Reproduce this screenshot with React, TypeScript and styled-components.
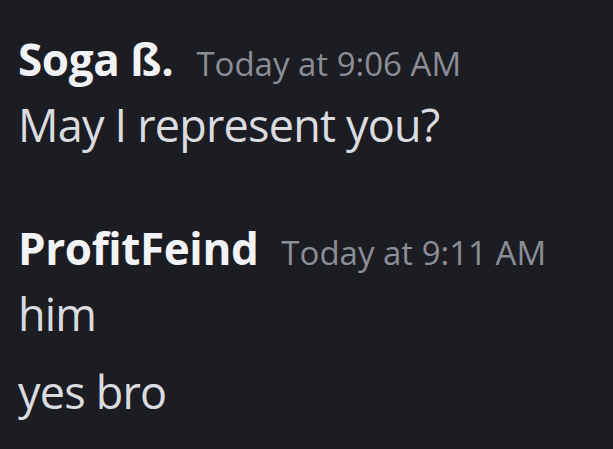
import styled, { createGlobalStyle } from 'styled-components';

const GlobalStyle = createGlobalStyle`
  html, body {
    margin: 0;
    padding: 0;
    background-color: #1c1d22;
  }
  body {
    font-family: 'Open Sans', 'Noto Sans', 'Liberation Sans', sans-serif;
  }
`;

interface messageGroupProps {
  author: string;
  time: string;
  lines: string[];
}

const MessageGroup = ({ author, time, lines }: messageGroupProps) => {
  return (
    <Group>
      <Header>
        <Author>{author}</Author>
        <Timestamp>{time}</Timestamp>
      </Header>
      <Lines>
        {lines.map((line, i) => (
          <Line key={i}>{line}</Line>
        ))}
      </Lines>
    </Group>
  );
};

const App = () => {
  return (
    <>
      <GlobalStyle />
      <Chat>
        <MessageGroup author="Soga ß." time="Today at 9:06 AM" lines={['May I represent you?']} />
        <MessageGroup author="ProfitFeind" time="Today at 9:11 AM" lines={['him', 'yes bro']} />
      </Chat>
    </>
  );
};

export default App;

const Chat = styled.div`
  display: flex;
  flex-direction: column;
  gap: 58px;
  width: 613px;
  height: 449px;
  box-sizing: border-box;
  padding: 31px 0 0 18px;
  overflow: hidden;
  background-color: #1c1d22;
`;

const Group = styled.div`
  display: flex;
  flex-direction: column;
`;

const Header = styled.div`
  display: flex;
  align-items: baseline;
  gap: 23px;
  height: 56px;
  line-height: 56px;
`;

const Author = styled.span`
  font-size: 44px;
  font-weight: 700;
  letter-spacing: -0.4px;
  color: #f2f3f5;
`;

const Timestamp = styled.span`
  font-size: 33px;
  color: #8b8e96;
`;

const Lines = styled.div`
  display: flex;
  flex-direction: column;
  gap: 3px;
`;

const Line = styled.div`
  font-size: 45px;
  line-height: 75px;
  letter-spacing: -0.8px;
  color: #dadce0;
`;
